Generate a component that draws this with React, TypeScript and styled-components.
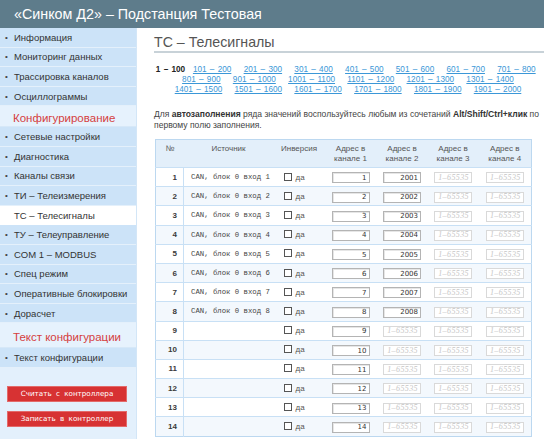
import React from "react";
import styled, { createGlobalStyle } from "styled-components";

const GlobalStyle = createGlobalStyle`
  html, body { margin: 0; padding: 0; background: #ffffff; }
  body { font-family: "Liberation Sans", Arial, sans-serif; color: #333; width: 544px; height: 439px; overflow: hidden; }
  * { box-sizing: border-box; }
`;

const Page = styled.div`
  display: flex;
  flex-direction: column;
  width: 544px;
  height: 439px;
  overflow: hidden;
`;

const Header = styled.header`
  height: 28px;
  flex: none;
  background: #5e7c8b;
  color: #ffffff;
  font-size: 14.3px;
  line-height: 29px;
  padding-left: 14px;
  white-space: nowrap;
`;

const Body = styled.div`
  flex: 1;
  display: grid;
  grid-template-columns: 137px 1fr;
  min-height: 0;
`;

const Sidebar = styled.nav`
  background: #e3f0fc;
  border-right: 1px solid #d3e6f7;
  display: flex;
  flex-direction: column;
`;

const NavItem = styled.div<{ $active?: boolean }>`
  height: 19.6px;
  display: flex;
  align-items: center;
  font-size: 9.5px;
  color: #333;
  background: ${(p) => (p.$active ? "#ffffff" : "#cce3f8")};
  border-bottom: 1px solid ${(p) => (p.$active ? "#ffffff" : "#e4f0fb")};
  padding-left: ${(p) => (p.$active ? "14px" : "5px")};
  white-space: nowrap;
  &::before {
    content: ${(p) => (p.$active ? "none" : "'•'")};
    width: 9px;
    font-size: 8px;
    color: #444;
  }
`;

const SectionTitle = styled.div<{ $h: number }>`
  height: ${(p) => p.$h}px;
  display: flex;
  align-items: center;
  padding: 3px 0 0 13px;
  font-size: 11.5px;
  color: #d5403d;
  background: #e6f2fd;
  border-bottom: 1px solid #d6e8f8;
`;

const Buttons = styled.div`
  display: flex;
  flex-direction: column;
  gap: 9px;
  padding: 18px 9px 0 7px;
`;

const RedButton = styled.button`
  height: 16px;
  width: 120px;
  background: #d73233;
  border: 1px solid #e36a6a;
  color: #ffffff;
  font-family: "DejaVu Sans", Verdana, sans-serif;
  font-size: 7.2px;
  word-spacing: 2px;
  padding: 0;
  cursor: pointer;
`;

const Main = styled.main`
  padding: 6px 2px 0 17px;
  overflow: hidden;
`;

const Title = styled.h1`
  margin: 0 -2px 0 0;
  font-weight: normal;
  font-size: 14.2px;
  line-height: 16px;
  color: #555;
  padding-bottom: 1px;
  border-bottom: 2px solid #c8d2d8;
`;

const Pager = styled.div`
  margin-top: 12px;
  text-align: center;
  font-size: 8.2px;
  line-height: 10px;
  word-spacing: 1px;
`;

const Current = styled.b`
  color: #222;
`;

const PageLink = styled.a`
  color: #3b97d7;
  text-decoration: underline;
  margin: 0 4.5px;
  white-space: nowrap;
`;

const Note = styled.p`
  margin: 14px 0 0;
  font-size: 8.55px;
  line-height: 11px;
  color: #444;
  b { color: #333; }
`;

const Table = styled.table`
  margin-top: 8px;
  margin-left: 1px;
  border-collapse: collapse;
  width: 376px;
  table-layout: fixed;
  border: 1px solid #bcd8f0;
`;

const Th = styled.th`
  background: #e3effa;
  font-weight: normal;
  font-size: 8px;
  line-height: 10px;
  color: #555;
  vertical-align: top;
  padding: 4px 2px 0;
  height: 28px;
  text-align: center;
`;

const Tr = styled.tr<{ $even: boolean }>`
  background: ${(p) => (p.$even ? "#f3f8fd" : "#ffffff")};
  border-top: 1px solid #c8e0f5;
`;

const NumCell = styled.td`
  height: 19.2px;
  padding: 0 6px 0 0;
  text-align: right;
  font-weight: bold;
  font-size: 8px;
  color: #3a3a3a;
  border-right: 1px solid #c8e0f5;
`;

const SrcCell = styled.td`
  padding: 0 0 0 7px;
  font-family: "Liberation Mono", "DejaVu Sans Mono", monospace;
  font-size: 7.3px;
  color: #444;
  white-space: nowrap;
`;

const InvCell = styled.td`
  padding: 0 0 0 10px;
  font-size: 8px;
  color: #555;
`;

const Check = styled.span`
  display: inline-block;
  width: 8px;
  height: 8px;
  border: 1px solid #555;
  background: #fff;
  vertical-align: -1px;
  margin-right: 4px;
`;

const AddrCell = styled.td`
  padding: 0;
  text-align: center;
`;

const AddrInput = styled.input<{ $filled: boolean }>`
  width: 38px;
  height: 11px;
  padding: 0 2px;
  margin: 0;
  border: 1px solid ${(p) => (p.$filled ? "#b4b4b4" : "#d9d9d9")};
  box-shadow: ${(p) => (p.$filled ? "inset 1px 1px 0 #e6e6e6" : "none")};
  background: #fff;
  font-family: "DejaVu Sans", Verdana, sans-serif;
  font-size: 7px;
  color: #333;
  text-align: right;
  vertical-align: middle;
  outline: none;
  &::placeholder {
    color: #c6c6c6;
    font-style: italic;
    font-family: "Liberation Serif", serif;
    font-size: 8px;
    letter-spacing: 0.4px;
  }
`;

const navTop = ["Информация", "Мониторинг данных", "Трассировка каналов", "Осциллограммы"];
const navConf = [
  "Сетевые настройки",
  "Диагностика",
  "Каналы связи",
  "ТИ – Телеизмерения",
  "ТС – Телесигналы",
  "ТУ – Телеуправление",
  "COM 1 – MODBUS",
  "Спец режим",
  "Оперативные блокировки",
  "Дорасчет",
];

const pages: string[] = [];
for (let i = 1; i < 20; i++) pages.push(`${i * 100 + 1} – ${(i + 1) * 100}`);

const rows = Array.from({ length: 14 }, (_, i) => i + 1);

export default function App() {
  return (
    <Page>
      <GlobalStyle />
      <Header>«Синком Д2» – Подстанция Тестовая</Header>
      <Body>
        <Sidebar>
          {navTop.map((t) => (
            <NavItem key={t}>{t}</NavItem>
          ))}
          <SectionTitle $h={21}>Конфигурирование</SectionTitle>
          {navConf.map((t) => (
            <NavItem key={t} $active={t === "ТС – Телесигналы"}>
              {t}
            </NavItem>
          ))}
          <SectionTitle $h={25}>Текст конфигурации</SectionTitle>
          <NavItem>Текст конфигурации</NavItem>
          <Buttons>
            <RedButton>Считать с контроллера</RedButton>
            <RedButton>Записать в контроллер</RedButton>
          </Buttons>
        </Sidebar>
        <Main>
          <Title>ТС – Телесигналы</Title>
          <Pager>
            <Current>1 – 100</Current>{" "}
            {pages.map((p) => (
              <React.Fragment key={p}>
                <PageLink href="#">{p}</PageLink>{" "}
              </React.Fragment>
            ))}
          </Pager>
          <Note>
            Для <b>автозаполнения</b> ряда значений воспользуйтесь любым из сочетаний{" "}
            <b>Alt/Shift/Ctrl+клик</b> по первому полю заполнения.
          </Note>
          <Table>
            <colgroup>
              <col style={{ width: 28 }} />
              <col style={{ width: 90 }} />
              <col style={{ width: 51 }} />
              <col style={{ width: 52 }} />
              <col style={{ width: 51 }} />
              <col style={{ width: 51 }} />
              <col style={{ width: 53 }} />
            </colgroup>
            <thead>
              <tr>
                <Th>№</Th>
                <Th>Источник</Th>
                <Th>Инверсия</Th>
                <Th>Адрес в<br />канале 1</Th>
                <Th>Адрес в<br />канале 2</Th>
                <Th>Адрес в<br />канале 3</Th>
                <Th>Адрес в<br />канале 4</Th>
              </tr>
            </thead>
            <tbody>
              {rows.map((n) => (
                <Tr key={n} $even={n % 2 === 0}>
                  <NumCell>{n}</NumCell>
                  <SrcCell>{n <= 8 ? `CAN, блок 0 вход ${n}` : ""}</SrcCell>
                  <InvCell>
                    <Check />да
                  </InvCell>
                  <AddrCell>
                    <AddrInput $filled defaultValue={String(n)} />
                  </AddrCell>
                  <AddrCell>
                    {n <= 8 ? (
                      <AddrInput $filled defaultValue={String(2000 + n)} />
                    ) : (
                      <AddrInput $filled={false} placeholder="1–65535" />
                    )}
                  </AddrCell>
                  <AddrCell>
                    <AddrInput $filled={false} placeholder="1–65535" />
                  </AddrCell>
                  <AddrCell>
                    <AddrInput $filled={false} placeholder="1–65535" />
                  </AddrCell>
                </Tr>
              ))}
            </tbody>
          </Table>
        </Main>
      </Body>
    </Page>
  );
}
